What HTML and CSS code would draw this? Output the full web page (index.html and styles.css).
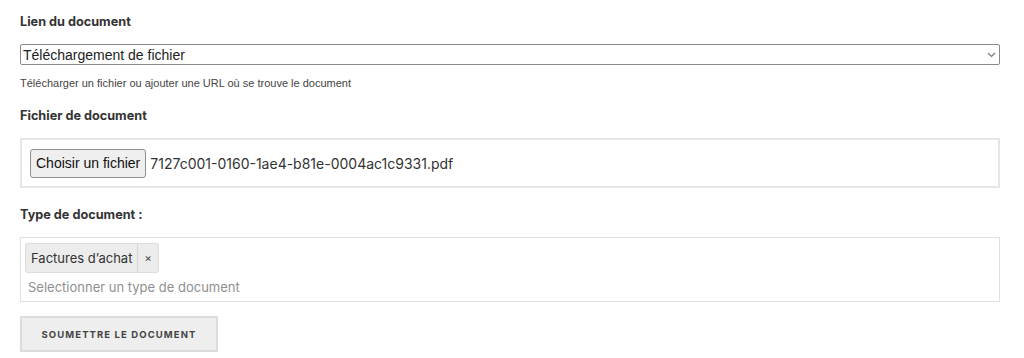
FILE: index.html
```html
<!DOCTYPE html>
<html>
	<head>
		<meta charset="utf-8">
		<meta name="viewport" content="width=device-width,initial-scale=1.0" />
		<title>Document</title>
		<link rel="stylesheet" href="styles.css">
	</head>
	<body>
		<form class="form">
			<div class="field">
				<label class="label">Lien du document</label>
				<div class="select">
					<span>Téléchargement de fichier</span>
					<svg class="chevron" width="9" height="6" viewBox="0 0 9 6"><path d="M1 1l3.5 3.5L8 1" fill="none" stroke="#777" stroke-width="1.2"/></svg>
				</div>
				<p class="help">Télécharger un fichier ou ajouter une URL où se trouve le document</p>
			</div>
			<div class="field field-file">
				<label class="label">Fichier de document</label>
				<div class="filebox">
					<span class="filebtn">Choisir un fichier</span>
					<span class="filename">7127c001-0160-1ae4-b81e-0004ac1c9331.pdf</span>
				</div>
			</div>
			<div class="field">
				<label class="label">Type de document :</label>
				<div class="tags">
					<div class="taglist">
						<span class="tag"><span class="tag-text">Factures d’achat</span><span class="tag-x">×</span></span>
					</div>
					<span class="placeholder">Selectionner un type de document</span>
				</div>
			</div>
			<button type="button" class="submit">Soumettre le document</button>
		</form>
	</body>
</html>
```

FILE: styles.css
```css
*{
	padding: 0;
	margin: 0;
	box-sizing: border-box;
}
body{
	background: #fff;
	font-family: Inter, "Liberation Sans", sans-serif;
	color: #333;
}
.form{
	width: 980px;
	margin-left: 20px;
	padding-top: 14px;
}
.field{
	margin-bottom: 20px;
}
.field-file{
	margin-bottom: 19px;
}
.label{
	display: block;
	font-size: 12.7px;
	font-weight: 700;
	color: #333;
	line-height: 16px;
	margin-bottom: 14px;
}
.select{
	height: 21px;
	border: 1px solid #8a8a8a;
	border-radius: 2px;
	display: flex;
	align-items: center;
	justify-content: space-between;
	padding: 0 3px 0 2px;
	font-family: "Liberation Sans", Arial, sans-serif;
	font-size: 14px;
	color: #222;
}
.chevron{
	margin-top: 1px;
}
.help{
	font-family: "Liberation Sans", Arial, sans-serif;
	font-size: 11px;
	line-height: 12px;
	color: #444;
	margin-top: 12px;
	margin-bottom: -1px;
}
.filebox{
	height: 50px;
	border: 2px solid #e6e6e6;
	display: flex;
	align-items: center;
	padding-left: 8px;
}
.filebtn{
	height: 29px;
	border: 1px solid #8f8f8f;
	border-radius: 3px;
	background: #efefef;
	padding: 0 5px;
	display: flex;
	align-items: center;
	font-family: "Liberation Sans", Arial, sans-serif;
	font-size: 14px;
	color: #111;
}
.filename{
	font-size: 14px;
	color: #333;
	margin-left: 4px;
}
.tags{
	border: 1px solid #e0e0e0;
	height: 65px;
	padding: 5px 4px 0 4px;
}
.tag{
	display: inline-flex;
	align-items: stretch;
	height: 30px;
	background: #ececec;
	border: 1px solid #ddd;
	border-radius: 2px;
	font-size: 13px;
	color: #333;
}
.tag-text{
	display: flex;
	align-items: center;
	padding: 0 5px;
	border-right: 1px solid #d6d6d6;
}
.tag-x{
	display: flex;
	align-items: center;
	padding: 0 6px;
	font-size: 11px;
	color: #444;
}
.placeholder{
	display: block;
	font-size: 13px;
	color: #8f8f8f;
	margin-top: 6px;
	padding-left: 3px;
}
.submit{
	display: block;
	width: 198px;
	height: 36px;
	margin-top: -6px;
	background: #eee;
	border: 2px solid #dcdcdc;
	font-family: Inter, "Liberation Sans", sans-serif;
	font-size: 9.5px;
	font-weight: 700;
	letter-spacing: 1.1px;
	text-transform: uppercase;
	color: #444;
}
```
